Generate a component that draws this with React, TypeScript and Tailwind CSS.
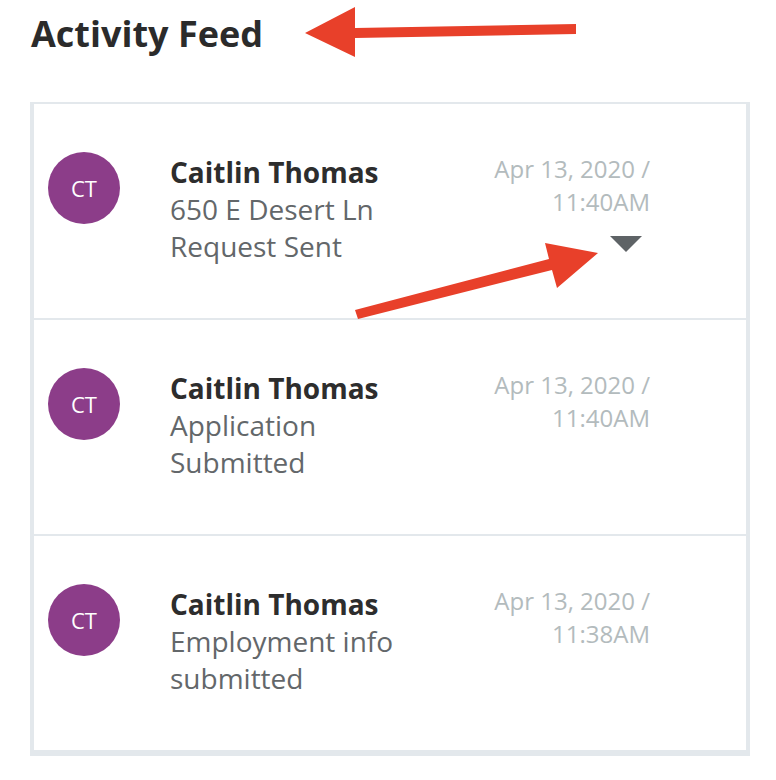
import React from "react";

type Item = { id: number; lines: string[]; date: string; time: string; open?: boolean };

const ITEMS: Item[] = [
  { id: 1, lines: ["650 E Desert Ln", "Request Sent"], date: "Apr 13, 2020 /", time: "11:40AM", open: true },
  { id: 2, lines: ["Application Submitted"], date: "Apr 13, 2020 /", time: "11:40AM" },
  { id: 3, lines: ["Employment info submitted"], date: "Apr 13, 2020 /", time: "11:38AM" },
];

function FeedRow({ item, last }: { item: Item; last: boolean }) {
  return (
    <div className={`flex items-start pl-[14px] pr-[96px] pt-[48px] ${last ? "h-[214px]" : "h-[216px] border-b-2 border-[#e3e8ec]"}`}>
      <div className="flex h-[72px] w-[72px] shrink-0 items-center justify-center rounded-full bg-[#8c3d89] text-[22px] text-white">
        CT
      </div>
      <div className="ml-[50px] w-[250px] pt-[2px]">
        <p className="text-[28px] font-bold leading-[37px] text-[#2d2d2d]">Caitlin Thomas</p>
        {item.lines.map((l) => (
          <p key={l} className="text-[28px] leading-[37px] text-[#63676a]">
            {l}
          </p>
        ))}
      </div>
      <div className="ml-auto flex flex-col items-end">
        <p className="text-right text-[24px] leading-[33px] text-[#b3bbbd]">
          {item.date}
          <br />
          {item.time}
        </p>
        {item.open ? (
          <svg width="32" height="16" viewBox="0 0 32 16" className="mr-[8px] mt-[18px]">
            <polygon points="0,0 32,0 16,16" fill="#5e6366" />
          </svg>
        ) : null}
      </div>
    </div>
  );
}

export default function App() {
  return (
    <div className="relative h-[780px] w-[776px] overflow-hidden bg-white font-['Open_Sans',sans-serif]">
      <h1 className="pl-[31px] pt-[12px] text-[36px] font-bold leading-[44px] text-[#2b2b2b]">Activity Feed</h1>
      <div className="ml-[30px] mt-[46px] w-[720px] border-x-4 border-b-[6px] border-t-2 border-[#e3e8ec]">
        {ITEMS.map((it, i) => (
          <FeedRow key={it.id} item={it} last={i === ITEMS.length - 1} />
        ))}
      </div>

      {/* annotation arrows */}
      <svg className="pointer-events-none absolute left-0 top-0" width="776" height="780" viewBox="0 0 776 780">
        <polygon points="305,33 355,7 355,28 576,24 576,34 355,38 355,57" fill="#e8402a" />
        <polygon points="598,253 545,243 549,259 355,310 358,319 552,270 557,288" fill="#e8402a" />
      </svg>
    </div>
  );
}
